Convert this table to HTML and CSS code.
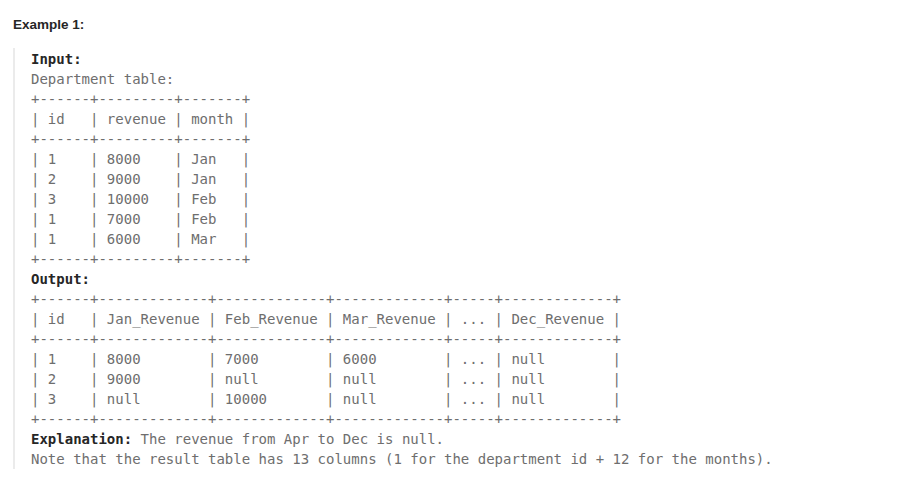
FILE: index.html
```html
<!DOCTYPE html>
<html>
<head>
<meta charset="utf-8">
<link rel="stylesheet" href="styles.css">
</head>
<body>
<div class="example">
<p class="example-title">Example 1:</p>
<pre class="example-block"><strong>Input:</strong>
Department table:
+------+---------+-------+
| id   | revenue | month |
+------+---------+-------+
| 1    | 8000    | Jan   |
| 2    | 9000    | Jan   |
| 3    | 10000   | Feb   |
| 1    | 7000    | Feb   |
| 1    | 6000    | Mar   |
+------+---------+-------+
<strong>Output:</strong>
+------+-------------+-------------+-------------+-----+-------------+
| id   | Jan_Revenue | Feb_Revenue | Mar_Revenue | ... | Dec_Revenue |
+------+-------------+-------------+-------------+-----+-------------+
| 1    | 8000        | 7000        | 6000        | ... | null        |
| 2    | 9000        | null        | null        | ... | null        |
| 3    | null        | 10000       | null        | ... | null        |
+------+-------------+-------------+-------------+-----+-------------+
<strong>Explanation:</strong> The revenue from Apr to Dec is null.
Note that the result table has 13 columns (1 for the department id + 12 for the months).</pre>
</div>
</body>
</html>
```
FILE: styles.css
```css
html, body {
  margin: 0;
  padding: 0;
  background: #ffffff;
}

body {
  padding: 15px 13px;
}

.example-title {
  margin: 0;
  font-family: "Liberation Sans", Arial, sans-serif;
  font-weight: bold;
  font-size: 13.5px;
  line-height: 20px;
  color: #262626;
}

.example-block {
  margin: 13px 0 0 0;
  padding: 1px 0 0 16px;
  border-left: 2px solid #ebebeb;
  font-family: "DejaVu Sans Mono", monospace;
  font-size: 14px;
  line-height: 20px;
  color: #6e6e6e;
  white-space: pre;
}

.example-block strong {
  font-weight: bold;
  color: #262626;
}
```
